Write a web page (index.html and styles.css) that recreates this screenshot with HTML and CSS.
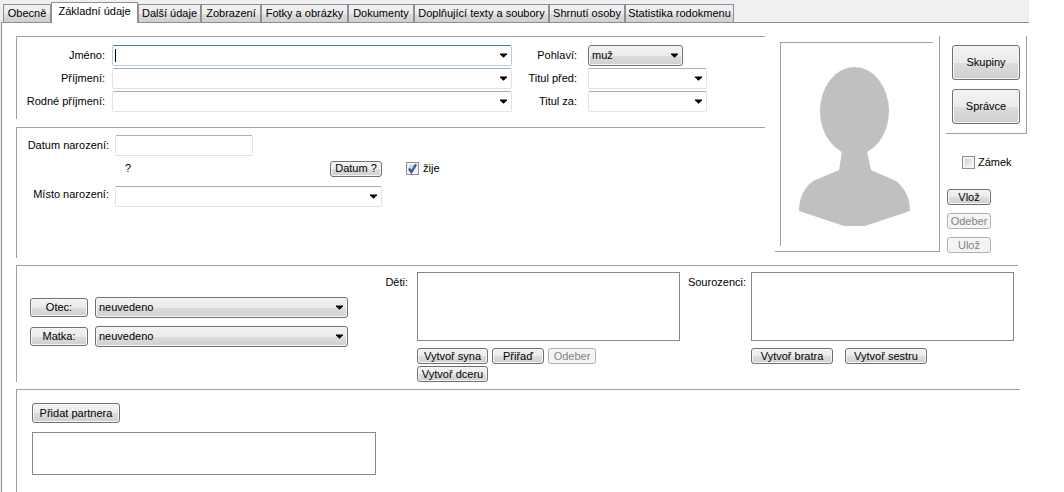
FILE: index.html
```html
<!DOCTYPE html>
<html lang="cs">
<head>
<meta charset="utf-8">
<title>Základní údaje</title>
<link rel="stylesheet" href="styles.css">
</head>
<body>
<div class="window">
  <nav class="tabs" role="tablist">
    <button class="tab" role="tab">Obecně</button>
    <button class="tab tab-active" role="tab" aria-selected="true">Základní údaje</button>
    <button class="tab" role="tab">Další údaje</button>
    <button class="tab" role="tab">Zobrazení</button>
    <button class="tab" role="tab">Fotky a obrázky</button>
    <button class="tab" role="tab">Dokumenty</button>
    <button class="tab" role="tab">Doplňující texty a soubory</button>
    <button class="tab" role="tab">Shrnutí osoby</button>
    <button class="tab" role="tab">Statistika rodokmenu</button>
  </nav>
  <main class="panel">
    <div class="top">
      <div class="person">
        <section class="group names">
          <label class="label" for="jmeno">Jméno:</label>
          <div class="combo combo-focus"><input id="jmeno" type="text"><svg class="arrow" viewBox="0 0 9 5"><path d="M0 0H9V1L5 5H4L0 1z"/></svg></div>
          <label class="label" for="pohlavi">Pohlaví:</label>
          <div class="drop drop-short"><select id="pohlavi"><option>muž</option></select><svg class="arrow" viewBox="0 0 9 5"><path d="M0 0H9V1L5 5H4L0 1z"/></svg></div>
          <label class="label" for="prijmeni">Příjmení:</label>
          <div class="combo"><input id="prijmeni" type="text"><svg class="arrow" viewBox="0 0 9 5"><path d="M0 0H9V1L5 5H4L0 1z"/></svg></div>
          <label class="label" for="titul-pred">Titul před:</label>
          <div class="combo"><input id="titul-pred" type="text"><svg class="arrow" viewBox="0 0 9 5"><path d="M0 0H9V1L5 5H4L0 1z"/></svg></div>
          <label class="label" for="rodne">Rodné příjmení:</label>
          <div class="combo"><input id="rodne" type="text"><svg class="arrow" viewBox="0 0 9 5"><path d="M0 0H9V1L5 5H4L0 1z"/></svg></div>
          <label class="label" for="titul-za">Titul za:</label>
          <div class="combo"><input id="titul-za" type="text"><svg class="arrow" viewBox="0 0 9 5"><path d="M0 0H9V1L5 5H4L0 1z"/></svg></div>
        </section>
        <section class="group birth">
          <label class="label" for="datum">Datum narození:</label>
          <div class="combo combo-date"><input id="datum" type="text"></div>
          <div class="date-row">
            <span>?</span>
            <button class="btn btn-date">Datum ?</button>
          </div>
          <label class="check"><input type="checkbox" checked>žije</label>
          <label class="label place-label" for="misto">Místo narození:</label>
          <div class="combo place-combo"><input id="misto" type="text"><svg class="arrow" viewBox="0 0 9 5"><path d="M0 0H9V1L5 5H4L0 1z"/></svg></div>
        </section>
      </div>
      <div class="photo">
        <div class="photo-inner">
          <svg class="silhouette" viewBox="0 0 152 203" role="img" aria-label="Fotografie">
            <ellipse cx="73.5" cy="68" rx="34.5" ry="44"/>
            <path d="M61 108L58 127L32 138Q18 149 18 168L63 183H84L129 168Q129 149 115 138L90 127L86 108z"/>
          </svg>
        </div>
      </div>
      <aside class="side">
        <div class="side-box">
          <button class="btn btn-big">Skupiny</button>
          <button class="btn btn-big">Správce</button>
        </div>
        <label class="check check-lock"><input type="checkbox">Zámek</label>
        <div class="side-actions">
          <button class="btn">Vlož</button>
          <button class="btn" disabled>Odeber</button>
          <button class="btn" disabled>Ulož</button>
        </div>
      </aside>
    </div>
    <section class="group family">
      <div class="parents">
        <button class="btn">Otec:</button>
        <div class="drop"><select aria-label="Otec"><option>neuvedeno</option></select><svg class="arrow" viewBox="0 0 9 5"><path d="M0 0H9V1L5 5H4L0 1z"/></svg></div>
        <button class="btn">Matka:</button>
        <div class="drop"><select aria-label="Matka"><option>neuvedeno</option></select><svg class="arrow" viewBox="0 0 9 5"><path d="M0 0H9V1L5 5H4L0 1z"/></svg></div>
      </div>
      <label class="label list-label" for="deti">Děti:</label>
      <div class="relatives">
        <select class="list" id="deti" size="4"></select>
        <div class="children-actions">
          <button class="btn">Vytvoř syna</button>
          <button class="btn">Přiřaď</button>
          <button class="btn" disabled>Odeber</button>
          <button class="btn">Vytvoř dceru</button>
        </div>
      </div>
      <label class="label list-label list-label-near" for="sourozenci">Sourozenci:</label>
      <div class="relatives">
        <select class="list" id="sourozenci" size="4"></select>
        <div class="sibling-actions">
          <button class="btn">Vytvoř bratra</button>
          <button class="btn">Vytvoř sestru</button>
        </div>
      </div>
    </section>
    <section class="group partners">
      <button class="btn btn-partner">Přidat partnera</button>
      <select class="list list-partner" size="4" aria-label="Partneři"></select>
    </section>
  </main>
</div>
</body>
</html>
```
FILE: styles.css
```css
* { box-sizing: border-box; }

body {
  margin: 0;
  background: #fff;
  color: #000;
  font: 11px/13px "Liberation Sans", Arial, sans-serif;
}

button, input, select {
  margin: 0;
  color: inherit;
  font: inherit;
}

.window {
  display: flex;
  flex-direction: column;
  min-height: 100vh;
  margin-right: 35px;
  background: #f0f0f0;
}

/* Tabs */
.tabs {
  display: grid;
  grid-template-columns: 48px 87px 63px 60px 87px 66px 135px 76px 109px;
  align-items: end;
  height: 23px;
  padding-left: 3px;
  margin-bottom: -1px;
}

.tab {
  height: 19px;
  padding: 0;
  border: 1px solid #8c8e98;
  background: linear-gradient(#f2f2f2 0, #ebebeb 50%, #dddddd 51%, #cfcfcf 100%);
  white-space: nowrap;
}

.tab-active {
  height: 21px;
  padding-bottom: 3px;
  border-bottom: 0;
  background: #fff;
  z-index: 1;
}

.panel {
  flex: 1;
  display: flex;
  flex-direction: column;
  gap: 7px;
  margin-left: 1px;
  padding: 13px 0 0 14px;
  border-top: 1px solid #8c8e98;
  border-left: 1px solid #8c8e98;
  background: #fff;
}

.group {
  border-top: 1px solid #a0a0a0;
  border-left: 1px solid #a0a0a0;
}

.label {
  text-align: right;
  white-space: nowrap;
}

/* Upper part */
.top {
  display: flex;
  align-items: flex-start;
}

.person {
  flex: 1;
  display: flex;
  flex-direction: column;
  gap: 8px;
  margin-right: 10px;
}

.names {
  display: grid;
  grid-template-columns: 88px 1fr 62px 119px;
  grid-auto-rows: 21px;
  gap: 2px 7px;
  align-items: center;
  min-height: 83px;
  padding: 8px 58px 0 0;
}

.names > :nth-child(4n + 3) { padding-right: 4px; }

.birth {
  display: grid;
  grid-template-columns: 92px 267px 1fr;
  grid-template-rows: 21px 15px 26px;
  gap: 5px 6px;
  align-items: center;
  align-content: start;
  min-height: 131px;
  padding-top: 7px;
}

.combo-date { width: 138px; }

.date-row {
  grid-column: 2;
  grid-row: 2;
  display: flex;
  align-items: center;
  justify-content: space-between;
  padding-left: 10px;
}

.birth .check {
  grid-column: 3;
  grid-row: 2;
  padding-left: 18px;
}

.place-label { grid-row: 3; }

.place-combo {
  grid-row: 3;
  align-self: end;
}

/* Controls */
.combo {
  display: flex;
  align-items: center;
  height: 21px;
  padding-right: 3px;
  border: 1px solid #e2e3ea;
  border-top-color: #abadb3;
  border-radius: 2px;
  background: #fff;
}

.combo input {
  flex: 1;
  min-width: 0;
  height: 17px;
  padding: 0 2px;
  border: 0;
  outline: 0;
  background: transparent;
}

.combo-focus {
  border-color: #b5cfe7;
  border-top-color: #3d7bad;
}

.combo-focus input {
  background: linear-gradient(#000, #000) 2px 2px / 1px 13px no-repeat;
}

.arrow {
  flex: none;
  width: 9px;
  height: 5px;
  padding: 0 1px;
  pointer-events: none;
}

.drop {
  display: grid;
  align-items: center;
  height: 21px;
}

.drop > * { grid-area: 1 / 1; }

.drop .arrow {
  justify-self: end;
  margin-right: 4px;
}

.drop-short { width: 95px; }

.drop select {
  appearance: none;
  width: 100%;
  height: 21px;
  padding: 0 16px 0 3px;
}

.btn, .drop select {
  border: 1px solid #707070;
  border-radius: 3px;
  background: linear-gradient(#f2f2f2 0, #ebebeb 50%, #dddddd 51%, #cfcfcf 100%);
  box-shadow: inset 0 0 0 1px #f6f6f6;
}

.btn {
  height: 16px;
  padding: 0;
  line-height: 13px;
  white-space: nowrap;
}

.btn:disabled {
  border-color: #adb2b5;
  background: #f4f4f4;
  color: #838383;
}

.btn-date { width: 52px; }

.check {
  display: flex;
  align-items: center;
  gap: 4px;
}

.check input {
  appearance: none;
  width: 13px;
  height: 13px;
  padding: 2px;
  border: 1px solid #8e8f8f;
  background: linear-gradient(135deg, #cbcfd5, #f6f6f6) content-box, #f4f4f4;
}

.check input:checked {
  background: url("data:image/svg+xml,%3Csvg xmlns='http://www.w3.org/2000/svg' viewBox='0 0 11 11'%3E%3Cpath d='M2.5 5.5L4.5 8.5L8.5 2' fill='none' stroke='%233f57a0' stroke-width='2'/%3E%3C/svg%3E") border-box, linear-gradient(135deg, #cbcfd5, #f6f6f6) content-box, #f4f4f4;
}

.list {
  display: block;
  width: 100%;
  height: 69px;
  padding: 0;
  border: 1px solid #828790;
  border-radius: 0;
  background: #fff;
  outline: 0;
}

/* Photo */
.photo {
  width: 165px;
  height: 216px;
  padding: 6px 6px 6px 5px;
  border-right: 1px solid #a0a0a0;
  border-bottom: 1px solid #a0a0a0;
}

.photo-inner {
  height: 204px;
  border-top: 1px solid #a0a0a0;
  border-left: 1px solid #a0a0a0;
}

.silhouette {
  display: block;
  width: 152px;
  height: 203px;
  fill: #c0c0c0;
}

/* Right column */
.side {
  width: 81px;
  margin: 0 2px 0 6px;
}

.side-box {
  display: flex;
  flex-direction: column;
  gap: 9px;
  padding: 9px 6px;
  border-right: 1px solid #a0a0a0;
  border-bottom: 1px solid #a0a0a0;
}

.btn-big { height: 35px; }

.check-lock {
  gap: 3px;
  margin: 22px 0 0 16px;
}

.side-actions {
  display: flex;
  flex-direction: column;
  gap: 8px;
  width: 44px;
  margin: 20px 0 0 1px;
}

/* Family */
.family {
  display: grid;
  grid-template-columns: 318px 69px 1fr 71px 1fr;
  min-height: 117px;
  margin-right: 11px;
  padding: 6px 4px 0 13px;
}

.parents {
  display: grid;
  grid-template-columns: 58px 1fr;
  gap: 8px 7px;
  align-items: center;
  align-content: start;
  padding-top: 25px;
}

.parents .btn { height: 19px; }

.list-label { padding: 4px 9px 0 0; }

.list-label-near { padding-right: 5px; }

.children-actions {
  display: grid;
  grid-template-columns: 71px 52px 48px;
  gap: 2px 4px;
  padding-top: 7px;
}

.sibling-actions {
  display: grid;
  grid-template-columns: 82px 82px;
  gap: 12px;
  padding-top: 7px;
}

/* Partners */
.partners {
  flex: 1;
  margin-right: 9px;
  padding: 13px 0 0 15px;
}

.btn-partner {
  width: 88px;
  height: 20px;
}

.list-partner {
  width: 344px;
  height: 43px;
  margin-top: 9px;
}
```
